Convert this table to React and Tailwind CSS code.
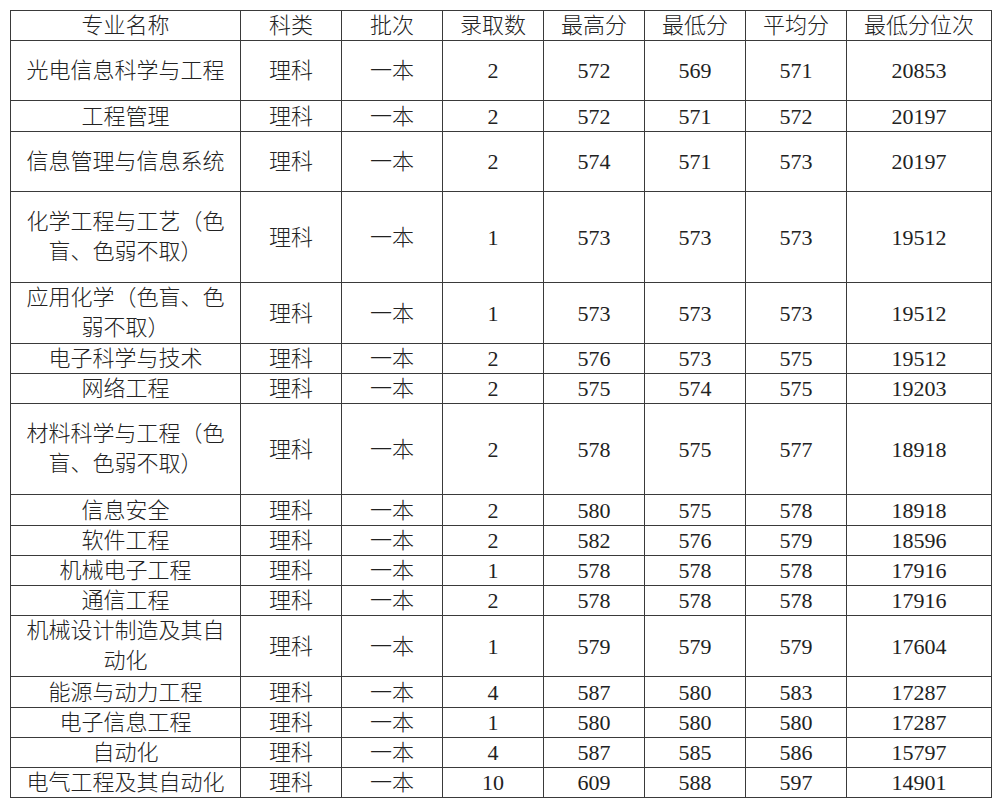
const headers = ['专业名称', '科类', '批次', '录取数', '最高分', '最低分', '平均分', '最低分位次']

// name lines, count, max, min, avg, rank, row height (px)
const rows = [
  { name: ['光电信息科学与工程'], n: '2', hi: '572', lo: '569', avg: '571', rank: '20853', h: 60 },
  { name: ['工程管理'], n: '2', hi: '572', lo: '571', avg: '572', rank: '20197', h: 31 },
  { name: ['信息管理与信息系统'], n: '2', hi: '574', lo: '571', avg: '573', rank: '20197', h: 60 },
  { name: ['化学工程与工艺（色', '盲、色弱不取）'], n: '1', hi: '573', lo: '573', avg: '573', rank: '19512', h: 91 },
  { name: ['应用化学（色盲、色', '弱不取）'], n: '1', hi: '573', lo: '573', avg: '573', rank: '19512', h: 61 },
  { name: ['电子科学与技术'], n: '2', hi: '576', lo: '573', avg: '575', rank: '19512', h: 30 },
  { name: ['网络工程'], n: '2', hi: '575', lo: '574', avg: '575', rank: '19203', h: 30 },
  { name: ['材料科学与工程（色', '盲、色弱不取）'], n: '2', hi: '578', lo: '575', avg: '577', rank: '18918', h: 91 },
  { name: ['信息安全'], n: '2', hi: '580', lo: '575', avg: '578', rank: '18918', h: 31 },
  { name: ['软件工程'], n: '2', hi: '582', lo: '576', avg: '579', rank: '18596', h: 30 },
  { name: ['机械电子工程'], n: '1', hi: '578', lo: '578', avg: '578', rank: '17916', h: 30 },
  { name: ['通信工程'], n: '2', hi: '578', lo: '578', avg: '578', rank: '17916', h: 30 },
  { name: ['机械设计制造及其自', '动化'], n: '1', hi: '579', lo: '579', avg: '579', rank: '17604', h: 61 },
  { name: ['能源与动力工程'], n: '4', hi: '587', lo: '580', avg: '583', rank: '17287', h: 31 },
  { name: ['电子信息工程'], n: '1', hi: '580', lo: '580', avg: '580', rank: '17287', h: 30 },
  { name: ['自动化'], n: '4', hi: '587', lo: '585', avg: '586', rank: '15797', h: 30 },
  { name: ['电气工程及其自动化'], n: '10', hi: '609', lo: '588', avg: '597', rank: '14901', h: 30 },
]

const cell = 'border border-[#3a3a3a] text-center align-middle p-0'

export default function App() {
  return (
    <div className="min-h-[808px] bg-white pt-[10px] pl-[10px]">
      <table
        className="border-collapse table-fixed w-[981px] text-[22px] leading-[29px] text-[#222]"
        style={{ fontFamily: '"Liberation Serif", "Noto Sans CJK SC", serif' }}
      >
        <colgroup>
          <col className="w-[230px]" />
          <col className="w-[101px]" />
          <col className="w-[101px]" />
          <col className="w-[101px]" />
          <col className="w-[101px]" />
          <col className="w-[101px]" />
          <col className="w-[101px]" />
          <col className="w-[145px]" />
        </colgroup>
        <thead>
          <tr className="h-[30px]">
            {headers.map((t) => (
              <th key={t} className={`${cell} font-light`}>{t}</th>
            ))}
          </tr>
        </thead>
        <tbody>
          {rows.map((r) => (
            <tr key={r.name.join('')} style={{ height: r.h }}>
              <td className={`${cell} font-light`}>
                {r.name.map((l) => (
                  <div key={l} className={r.name.length > 1 ? 'leading-[30px]' : ''}>{l}</div>
                ))}
              </td>
              <td className={`${cell} font-light`}>理科</td>
              <td className={`${cell} font-light`}>一本</td>
              <td className={cell}>{r.n}</td>
              <td className={cell}>{r.hi}</td>
              <td className={cell}>{r.lo}</td>
              <td className={cell}>{r.avg}</td>
              <td className={cell}>{r.rank}</td>
            </tr>
          ))}
        </tbody>
      </table>
    </div>
  )
}
